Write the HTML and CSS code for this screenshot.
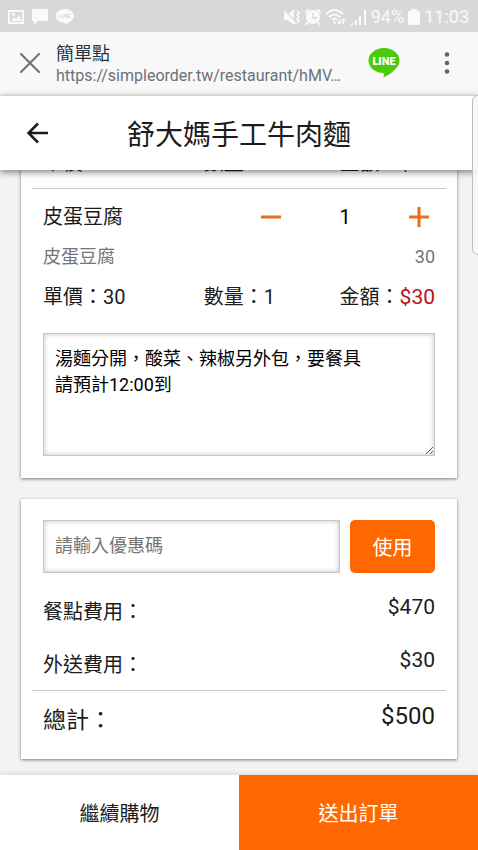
FILE: index.html
```html
<!DOCTYPE html>
<html lang="zh-Hant">
<head>
<meta charset="utf-8">
<meta name="viewport" content="width=device-width, initial-scale=1">
<title>簡單點</title>
<link rel="stylesheet" href="styles.css">
</head>
<body>
<div class="status">
  <div class="status-group">
    <svg width="16" height="16" viewBox="0 0 16 16" fill="#fafafa"><path fill-rule="evenodd" d="M0 1h16v14H0zM2 3v10h12V3zM3 12l3-4 2 2 3-4 3 6zM4 4h3v3H4z"/></svg>
    <svg width="16" height="16" viewBox="0 0 16 16" fill="#fafafa"><path d="M0 0h16v12H6l-4 4v-4H0z"/></svg>
    <svg width="18" height="16" viewBox="0 0 18 16"><path fill="#fafafa" d="M9 0c5 0 9 3 9 7 0 3-3 5-9 9 0-1 1-2 0-2-5 0-9-3-9-7s4-7 9-7z"/><text x="9" y="9" class="line-small">LINE</text></svg>
  </div>
  <div class="status-group status-right">
    <svg width="17" height="16" viewBox="0 0 17 16" fill="#fafafa"><path d="M0 5h4l6-5v16l-6-5H0z"/><path d="M0 1l12 13" stroke="#d8d8d8" stroke-width="2"/><path d="M0 2l12 13M13 2l2 2-2 2 2 2-2 2 2 2-2 2" fill="none" stroke="#fafafa" stroke-width="1.6"/></svg>
    <svg width="16" height="16" viewBox="0 0 16 16"><circle cx="8" cy="8" r="7" fill="#fafafa"/><path d="M0 4l4-4M12 0l4 4M3 13l-2 3M13 13l2 3" stroke="#fafafa" stroke-width="2"/><path d="M8 4v5h4" fill="none" stroke="#d8d8d8" stroke-width="1.5"/></svg>
    <svg width="21" height="16" viewBox="0 0 21 16" fill="none" stroke="#fafafa" stroke-width="2"><path d="M1 5q8.500-8 17 0M4 8q5.500-5 11 0M7 11q2.500-2.500 5 0"/><circle cx="9.500" cy="13.500" r="1" fill="#fafafa" stroke-width="1"/><path d="M14.500 15v-5m-2 3l2 2 2-2M18.500 15v-5m-2 2l2-2 2 2" stroke-width="1.200"/></svg>
    <svg width="17" height="16" viewBox="0 0 17 16" fill="#fafafa"><path d="M0 16l3-3v3zM5 11h2v5H5zM9 7h2v9H9zM14 1h2v15h-2z"/></svg>
    <span class="status-text">94%</span>
    <svg width="12" height="16" viewBox="0 0 12 16" fill="#fafafa"><path d="M3 0h6v2h2q1 0 1 1v12q0 1-1 1H1q-1 0-1-1V3q0-1 1-1h2z"/></svg>
    <span class="status-text">11:03</span>
  </div>
</div>

<div class="browser">
  <button class="icon-btn" aria-label="關閉"><svg width="20" height="20" viewBox="0 0 20 20"><path d="M1 1l18 18M19 1L1 19" stroke="#6c7078" stroke-width="2" stroke-linecap="round"/></svg></button>
  <div class="page-info">
    <div class="page-name">簡單點</div>
    <div class="page-url">https://simpleorder.tw/restaurant/hMV…</div>
  </div>
  <button class="icon-btn line-btn" aria-label="LINE"><svg width="32" height="30" viewBox="0 0 32 30"><path fill="#4bcb08" d="M16 0c8.500 0 15.500 5.500 15.500 12.500 0 3-1.300 5.700-3.500 8-3 3.500-7.500 6.500-12.500 9 .3-1.500.6-3.500 0-4.500C7 24.700.5 19.500.5 12.500.5 5.500 7.500 0 16 0z"/><text x="16" y="17" class="line-word">LINE</text></svg></button>
  <button class="icon-btn" aria-label="更多"><svg width="6" height="22" viewBox="0 0 6 22" fill="#5f646c"><circle cx="3" cy="2.500" r="2.300"/><circle cx="3" cy="11" r="2.300"/><circle cx="3" cy="19.500" r="2.300"/></svg></button>
</div>

<header class="app-bar">
  <button class="icon-btn back" aria-label="返回"><svg width="22" height="22" viewBox="0 0 22 22"><path d="M21 11H2M11 1.500L1.500 11l9.500 9.500" fill="none" stroke="#1c1c1c" stroke-width="2.600"/></svg></button>
  <h1>舒大媽手工牛肉麵</h1>
</header>

<main>
  <section class="card order">
    <div class="sums"><span>單價：80</span><span>數量：1</span><span>金額：<b>$80</b></span></div>
    <hr>
    <div class="item-row">
      <span class="item-name">皮蛋豆腐</span>
      <button class="icon-btn" aria-label="減少"><svg width="20" height="20" viewBox="0 0 20 20"><path d="M0 10h20" stroke="#ec6e1b" stroke-width="3"/></svg></button>
      <span class="qty">1</span>
      <button class="icon-btn" aria-label="增加"><svg width="20" height="20" viewBox="0 0 20 20"><path d="M0 10h20M10 0v20" stroke="#ec6e1b" stroke-width="3"/></svg></button>
    </div>
    <div class="detail"><span>皮蛋豆腐</span><span>30</span></div>
    <div class="sums"><span>單價：30</span><span>數量：1</span><span>金額：<b>$30</b></span></div>
    <textarea aria-label="備註">湯麵分開，酸菜、辣椒另外包，要餐具
請預計12:00到</textarea>
  </section>

  <section class="card">
    <form class="coupon">
      <input type="text" placeholder="請輸入優惠碼" aria-label="優惠碼">
      <button type="button">使用</button>
    </form>
    <dl>
      <div class="fee"><dt>餐點費用：</dt><dd>$470</dd></div>
      <div class="fee"><dt>外送費用：</dt><dd>$30</dd></div>
    </dl>
    <hr>
    <dl>
      <div class="fee total"><dt>總計：</dt><dd>$500</dd></div>
    </dl>
  </section>
</main>

<footer>
  <button>繼續購物</button>
  <button class="primary">送出訂單</button>
</footer>
<div class="edge-handle"></div>
</body>
</html>
```

FILE: styles.css
```css
* { box-sizing: border-box; }

body {
  margin: 0;
  height: 100vh;
  display: flex;
  flex-direction: column;
  overflow: hidden;
  position: relative;
  background: #f3f3f3;
  color: #1c1c1c;
  font-family: Roboto, "Noto Sans CJK TC", sans-serif;
  font-size: 20px;
  line-height: 28px;
}

button, input, textarea { font: inherit; color: inherit; }
button { border: 0; padding: 0; background: none; }
svg { display: block; }
.icon-btn { display: flex; flex: none; }

.status {
  flex: none;
  height: 32px;
  padding: 1px 9px 0 8px;
  display: flex;
  align-items: center;
  justify-content: space-between;
  background: #d8d8d8;
  color: #fafafa;
}
.status-group { display: flex; align-items: center; gap: 8px; }
.status-right { gap: 4px; }
.status-text { font-size: 18px; }
.line-small { font: bold 5px "Liberation Sans", sans-serif; fill: #d8d8d8; text-anchor: middle; }
.line-word { font: 900 11px Roboto, sans-serif; fill: #fff; text-anchor: middle; }

.browser {
  flex: none;
  height: 64px;
  padding: 0 28px 0 20px;
  display: flex;
  align-items: center;
  background: #f8f8f8;
  border-bottom: 2px solid #efefef;
}
.page-info { flex: 1; min-width: 0; margin-left: 16px; padding-top: 4px; }
.page-name { font-size: 18px; line-height: 22px; color: #2a3242; }
.page-url {
  font-size: 16px;
  line-height: 22px;
  color: #6c7078;
  white-space: nowrap;
}
.line-btn { margin-right: 44px; }

.app-bar {
  flex: none;
  height: 74px;
  padding: 0 27px;
  display: grid;
  grid-template-columns: 22px 1fr 22px;
  align-items: center;
  background: #fff;
  box-shadow: 0 2px 7px rgba(0, 0, 0, 0.5);
  position: relative;
  z-index: 1;
}
h1 {
  margin: 0;
  padding-top: 6px;
  font-size: 28px;
  line-height: 40px;
  font-weight: 400;
  text-align: center;
}

main {
  flex: 1;
  min-height: 0;
  overflow: hidden;
  padding: 0 21px 16px;
  display: flex;
  flex-direction: column;
  justify-content: flex-end;
  gap: 21px;
}

.card {
  flex: none;
  padding: 21px 22px;
  background: #fff;
  box-shadow: 0 1px 3px rgba(0, 0, 0, 0.5);
}
.order { padding-bottom: 22px; }
hr { margin: 0 -11px; border: 0; border-top: 1px solid #cbcbcb; }

.sums { display: grid; grid-template-columns: 41% 1fr auto; }
.sums b { font-size: 21px; font-weight: 400; color: #bd1212; }
.item-row {
  margin-top: 14px;
  padding-right: 6px;
  display: grid;
  grid-template-columns: 1fr 20px 128px 20px;
  align-items: center;
}
.qty { text-align: center; color: #000; }
.detail {
  margin: 12px 0;
  display: flex;
  justify-content: space-between;
  font-size: 18px;
  color: #757575;
}
.order .sums:first-child { margin-bottom: 11px; }

textarea, input {
  border: 1px solid #c8c8c8;
  border-radius: 0;
  background: #fff;
  box-shadow: inset 0 0 5px rgba(0, 0, 0, 0.25);
  padding: 11px;
  font-size: 18px;
  line-height: 26px;
  outline: 0;
}
textarea {
  display: block;
  width: 100%;
  height: 123px;
  margin-top: 22px;
  padding-top: 12px;
  color: #000;
}

.coupon { display: flex; gap: 10px; }
.coupon input { flex: 1; min-width: 0; height: 53px; padding-bottom: 13px; }
.coupon input::placeholder { color: #757575; }
.coupon button {
  width: 85px;
  padding-top: 2px;
  border-radius: 5px;
  background: #ff6800;
  color: #fff;
}

dl { margin: 0; }
.fee { height: 53px; padding-top: 20px; display: flex; justify-content: space-between; }
.fee dt { padding-top: 5px; }
.fee dd { margin: 0; font-size: 21px; }
.coupon + dl { padding-bottom: 11px; }
.total { height: 47px; padding-top: 11px; font-size: 23px; }
.total dd { font-size: 24px; }

footer {
  flex: none;
  height: 75px;
  display: grid;
  grid-template-columns: 1fr 1fr;
  background: #fff;
  box-shadow: 0 0 6px rgba(0, 0, 0, 0.15);
  position: relative;
}
footer button { padding-top: 2px; }
footer .primary { background: #ff6800; color: #fff; }

.edge-handle {
  position: absolute;
  z-index: 2;
  top: 95px;
  right: -6px;
  width: 12px;
  height: 160px;
  border: 1px solid #bdbdbd;
  border-radius: 7px;
  background: rgba(248, 248, 248, 0.85);
}
```
